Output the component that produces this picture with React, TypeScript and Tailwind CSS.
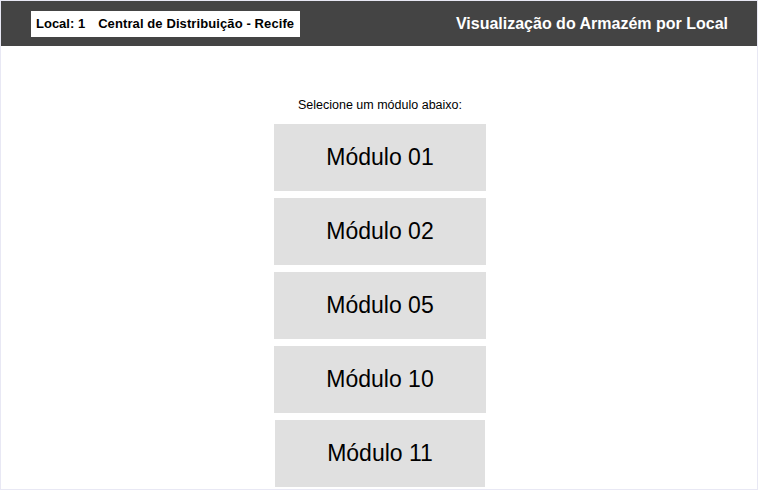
import React from "react";

const modules = ["01", "02", "05", "10", "11"];

export default function App() {
  return (
    <div
      className="w-[758px] h-[490px] overflow-hidden border border-[#e8e8f4] bg-white"
      style={{ fontFamily: '"Liberation Sans", Arial, sans-serif' }}
    >
      <header className="h-[45px] bg-[#444444] flex items-center justify-between pl-[30px] pr-[29px]">
        <div className="bg-white h-[26px] w-[269px] flex items-center pl-[5px] text-[13px] font-bold text-black">
          <span>Local: 1</span>
          <span className="ml-[13px] tracking-[0.1px]">Central de Distribuição - Recife</span>
        </div>
        <h1 className="text-white font-bold text-[16px]">Visualização do Armazém por Local</h1>
      </header>
      <main className="flex flex-col items-center pt-[52px] pl-[2px]">
        <p className="text-[12.5px] text-black leading-[14px] mb-[12px]">Selecione um módulo abaixo:</p>
        <div className="flex flex-col items-center gap-[7px]">
          {modules.map((m, i) => (
            <button
              key={m}
              className={
                i === 4
                  ? "w-[210px] h-[67px] bg-[#e0e0e0] text-[23px] text-black flex items-center justify-center"
                  : "w-[212px] h-[67px] bg-[#e0e0e0] text-[23px] text-black flex items-center justify-center"
              }
            >
              Módulo {m}
            </button>
          ))}
        </div>
      </main>
    </div>
  );
}
